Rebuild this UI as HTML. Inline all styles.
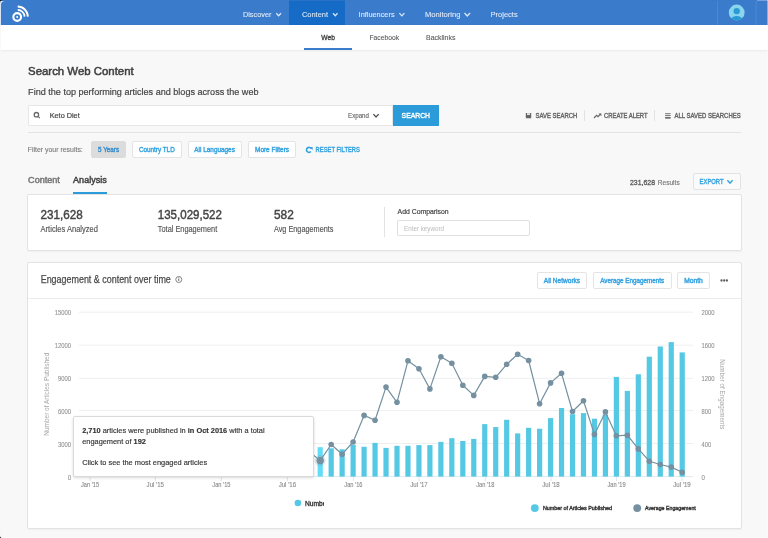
<!DOCTYPE html>
<html><head><meta charset="utf-8"><title>Search Web Content</title>
<style>
html,body{margin:0;padding:0;}
body{width:768px;height:538px;overflow:hidden;background:#f8f8f8;position:relative;font-family:"Liberation Sans", sans-serif;}
.L div{position:absolute;}
svg{position:absolute;left:0;top:0;font-family:"Liberation Sans", sans-serif;will-change:transform;}
</style></head><body>
<div class="L">
<div style="left:0px;top:0px;width:768px;height:25px;background:#3b7bcc;"></div>
<div style="left:289px;top:0px;width:56px;height:1px;background:#2a71c8;"></div>
<div style="left:289px;top:1px;width:56px;height:24px;background:#156bc5;"></div>
<div style="left:717px;top:1px;width:1px;height:24px;background:rgba(255,255,255,0.1);"></div>
<div style="left:755px;top:1px;width:2px;height:24px;background:rgba(255,255,255,0.05);"></div>
<div style="left:757px;top:0px;width:11px;height:1px;background:rgba(255,255,255,0.3);"></div>
<div style="left:0px;top:25px;width:768px;height:25px;background:#fff;box-shadow:0 1px 2px rgba(0,0,0,0.06);"></div>
<div style="left:304px;top:48px;width:48px;height:2px;background:#3b7bcc;"></div>
<div style="left:28px;top:105px;width:365px;height:21px;background:#fff;border:1px solid #e6e6e6;box-sizing:border-box;border-radius:1px;"></div>
<div style="left:393px;top:105px;width:46px;height:21px;background:#2b9cd9;"></div>
<div style="left:584px;top:110px;width:1px;height:11px;background:#e2e2e2;"></div>
<div style="left:654px;top:110px;width:1px;height:11px;background:#e2e2e2;"></div>
<div style="left:28px;top:132px;width:713px;height:1px;background:#e3e3e3;"></div>
<div style="left:91px;top:141px;width:35px;height:17px;background:#dcdcdc;border:1px solid #dcdcdc;box-sizing:border-box;border-radius:2px;"></div>
<div style="left:132px;top:141px;width:50px;height:17px;background:#fff;border:1px solid #e4e4e4;box-sizing:border-box;border-radius:2px;"></div>
<div style="left:188px;top:141px;width:54px;height:17px;background:#fff;border:1px solid #e4e4e4;box-sizing:border-box;border-radius:2px;"></div>
<div style="left:248px;top:141px;width:48px;height:17px;background:#fff;border:1px solid #e4e4e4;box-sizing:border-box;border-radius:2px;"></div>
<div style="left:73px;top:192px;width:34px;height:2px;background:#2b9cd9;"></div>
<div style="left:693px;top:173px;width:48px;height:17px;background:#fafafa;border:1px solid #e3e3e3;box-sizing:border-box;border-radius:2px;"></div>
<div style="left:27px;top:194px;width:715px;height:57px;background:#fff;border:1px solid #e3e3e3;box-sizing:border-box;border-radius:2px;box-shadow:0 1px 1px rgba(0,0,0,0.04);"></div>
<div style="left:384px;top:207px;width:1px;height:30px;background:#e3e3e3;"></div>
<div style="left:397px;top:220px;width:133px;height:16px;background:#fff;border:1px solid #e0e0e0;box-sizing:border-box;border-radius:2px;"></div>
<div style="left:27px;top:262px;width:715px;height:267px;background:#fff;border:1px solid #e3e3e3;box-sizing:border-box;border-radius:2px;box-shadow:0 1px 1px rgba(0,0,0,0.04);"></div>
<div style="left:28px;top:298px;width:713px;height:1px;background:#ececec;"></div>
<div style="left:537px;top:272px;width:50px;height:17px;background:#fff;border:1px solid #e4e4e4;box-sizing:border-box;border-radius:2px;"></div>
<div style="left:593px;top:272px;width:79px;height:17px;background:#fff;border:1px solid #e4e4e4;box-sizing:border-box;border-radius:2px;"></div>
<div style="left:677px;top:272px;width:33px;height:17px;background:#fff;border:1px solid #e4e4e4;box-sizing:border-box;border-radius:2px;"></div>
</div>
<svg width="768" height="538" viewBox="0 0 768 538">
<polyline points="276.30,13.21 278.65,15.79 281.00,13.21" fill="none" stroke="rgba(255,255,255,0.82)" stroke-width="1.3"/>
<polyline points="333.00,13.26 335.25,15.74 337.50,13.26" fill="none" stroke="rgba(255,255,255,0.82)" stroke-width="1.3"/>
<polyline points="399.40,13.12 401.90,15.88 404.40,13.12" fill="none" stroke="rgba(255,255,255,0.82)" stroke-width="1.3"/>
<polyline points="464.50,12.99 467.25,16.01 470.00,12.99" fill="none" stroke="rgba(255,255,255,0.82)" stroke-width="1.3"/>
<g fill="none" stroke="#fff"><circle cx="17.2" cy="17.0" r="3.85" stroke-width="2.1"/><circle cx="17.2" cy="17.0" r="1.0" fill="#fff" stroke="none"/><path d="M17.7 9.9 A7.1 7.1 0 0 1 24.6 16.6" stroke-width="1.8"/><path d="M17.7 6.5 A10.4 10.4 0 0 1 27.9 16.6" stroke-width="1.8"/></g>
<circle cx="736.7" cy="12.5" r="7.9" fill="#8ad5ee"/><circle cx="736.7" cy="11.1" r="3.2" fill="#2a9ad6"/><clipPath id="av"><circle cx="736.7" cy="12.5" r="7.9"/></clipPath><ellipse cx="736.7" cy="20.0" rx="5.8" ry="4.0" fill="#2a9ad6" clip-path="url(#av)"/>
<circle cx="36.4" cy="114.7" r="2.2" fill="none" stroke="#6a6a6a" stroke-width="1.3"/><line x1="38.1" y1="116.4" x2="39.8" y2="118.1" stroke="#6a6a6a" stroke-width="1.3"/>
<polyline points="373.40,114.14 376.05,117.06 378.70,114.14" fill="none" stroke="#555" stroke-width="1.4"/>
<rect x="525.8" y="112.9" width="5.4" height="5.4" rx="0.6" fill="#666"/><rect x="527.0" y="113.3" width="3.0" height="1.6" fill="#f6f6f6"/>
<polyline points="594,118 596.6,115.4 598,116.6 600.6,114" fill="none" stroke="#666" stroke-width="1.2"/><polygon points="598.6,113.4 601.4,113.4 601.4,116.2" fill="#666"/>
<g fill="#707070"><rect x="665.1" y="113.2" width="5.5" height="1.0"/><rect x="665.1" y="115.1" width="5.5" height="1.0"/><rect x="665.1" y="117.0" width="5.5" height="1.7"/></g>
<path d="M311.27 148.84 A2.5 2.5 0 1 0 310.9 151.5" fill="none" stroke="#35a2e0" stroke-width="1.6"/><polygon points="309.6,147.0 312.6,147.0 312.6,150.0" fill="#35a2e0"/>
<polyline points="727.40,180.37 730.00,183.23 732.60,180.37" fill="none" stroke="#35a2e0" stroke-width="1.5"/>
<circle cx="178.75" cy="279.5" r="3.0" fill="none" stroke="#808080" stroke-width="1.0"/><rect x="178.25" y="278.6" width="1.0" height="2.3" fill="#666"/><rect x="178.25" y="277.4" width="1.0" height="0.8" fill="#777"/>
<g fill="#5c5c5c"><circle cx="721.5" cy="280.5" r="1.15"/><circle cx="724.2" cy="280.5" r="1.15"/><circle cx="726.9" cy="280.5" r="1.15"/></g>
<line x1="78.9" y1="312.2" x2="693.2" y2="312.2" stroke="#efefef" stroke-width="1"/>
<line x1="78.9" y1="345.2" x2="693.2" y2="345.2" stroke="#efefef" stroke-width="1"/>
<line x1="78.9" y1="378.3" x2="693.2" y2="378.3" stroke="#efefef" stroke-width="1"/>
<line x1="78.9" y1="410.6" x2="693.2" y2="410.6" stroke="#efefef" stroke-width="1"/>
<line x1="78.9" y1="443.5" x2="693.2" y2="443.5" stroke="#efefef" stroke-width="1"/>
<line x1="78.9" y1="476.6" x2="693.2" y2="476.6" stroke="#dfe8f0" stroke-width="1"/>
<line x1="90" y1="476.6" x2="90" y2="481.20000000000005" stroke="#dde6ef" stroke-width="1"/>
<line x1="155.3" y1="476.6" x2="155.3" y2="481.20000000000005" stroke="#dde6ef" stroke-width="1"/>
<line x1="221.4" y1="476.6" x2="221.4" y2="481.20000000000005" stroke="#dde6ef" stroke-width="1"/>
<line x1="287.4" y1="476.6" x2="287.4" y2="481.20000000000005" stroke="#dde6ef" stroke-width="1"/>
<line x1="353.4" y1="476.6" x2="353.4" y2="481.20000000000005" stroke="#dde6ef" stroke-width="1"/>
<line x1="419" y1="476.6" x2="419" y2="481.20000000000005" stroke="#dde6ef" stroke-width="1"/>
<line x1="485.3" y1="476.6" x2="485.3" y2="481.20000000000005" stroke="#dde6ef" stroke-width="1"/>
<line x1="551" y1="476.6" x2="551" y2="481.20000000000005" stroke="#dde6ef" stroke-width="1"/>
<line x1="616.5" y1="476.6" x2="616.5" y2="481.20000000000005" stroke="#dde6ef" stroke-width="1"/>
<line x1="682" y1="476.6" x2="682" y2="481.20000000000005" stroke="#dde6ef" stroke-width="1"/>
<rect x="317.60" y="447.20" width="5.2" height="29.40" fill="#62dcf7"/><rect x="328.57" y="448.30" width="5.2" height="28.30" fill="#55c9e4"/><rect x="339.54" y="449.30" width="5.2" height="27.30" fill="#55c9e4"/><rect x="350.51" y="444.80" width="5.2" height="31.80" fill="#55c9e4"/><rect x="361.48" y="446.80" width="5.2" height="29.80" fill="#55c9e4"/><rect x="372.45" y="442.90" width="5.2" height="33.70" fill="#55c9e4"/><rect x="383.42" y="447.90" width="5.2" height="28.70" fill="#55c9e4"/><rect x="394.39" y="445.80" width="5.2" height="30.80" fill="#55c9e4"/><rect x="405.36" y="445.80" width="5.2" height="30.80" fill="#55c9e4"/><rect x="416.33" y="445.10" width="5.2" height="31.50" fill="#55c9e4"/><rect x="427.30" y="445.10" width="5.2" height="31.50" fill="#55c9e4"/><rect x="438.27" y="441.90" width="5.2" height="34.70" fill="#55c9e4"/><rect x="449.24" y="438.20" width="5.2" height="38.40" fill="#55c9e4"/><rect x="460.21" y="441.00" width="5.2" height="35.60" fill="#55c9e4"/><rect x="471.18" y="438.90" width="5.2" height="37.70" fill="#55c9e4"/><rect x="482.15" y="424.10" width="5.2" height="52.50" fill="#55c9e4"/><rect x="493.12" y="427.10" width="5.2" height="49.50" fill="#55c9e4"/><rect x="504.09" y="419.80" width="5.2" height="56.80" fill="#55c9e4"/><rect x="515.06" y="433.40" width="5.2" height="43.20" fill="#55c9e4"/><rect x="526.03" y="427.80" width="5.2" height="48.80" fill="#55c9e4"/><rect x="537.00" y="428.70" width="5.2" height="47.90" fill="#55c9e4"/><rect x="547.97" y="418.10" width="5.2" height="58.50" fill="#55c9e4"/><rect x="558.94" y="408.00" width="5.2" height="68.60" fill="#55c9e4"/><rect x="569.91" y="414.20" width="5.2" height="62.40" fill="#55c9e4"/><rect x="580.88" y="413.10" width="5.2" height="63.50" fill="#55c9e4"/><rect x="591.85" y="418.70" width="5.2" height="57.90" fill="#55c9e4"/><rect x="602.82" y="414.60" width="5.2" height="62.00" fill="#55c9e4"/><rect x="613.79" y="376.90" width="5.2" height="99.70" fill="#55c9e4"/><rect x="624.76" y="390.90" width="5.2" height="85.70" fill="#55c9e4"/><rect x="635.73" y="374.30" width="5.2" height="102.30" fill="#55c9e4"/><rect x="646.70" y="356.70" width="5.2" height="119.90" fill="#55c9e4"/><rect x="657.67" y="346.50" width="5.2" height="130.10" fill="#55c9e4"/><rect x="668.64" y="342.10" width="5.2" height="134.50" fill="#55c9e4"/><rect x="679.61" y="352.40" width="5.2" height="124.20" fill="#55c9e4"/>
<path d="M300,444 L320.20,460.60 L331.17,444.50 L342.14,454.20 L353.11,442.00 L364.08,415.40 L375.05,420.30 L386.02,387.10 L396.99,402.30 L407.96,360.80 L418.93,368.80 L429.90,388.90 L440.87,356.70 L451.84,363.20 L462.81,385.20 L473.78,395.40 L484.75,376.40 L495.72,377.30 L506.69,364.30 L517.66,354.30 L528.63,360.50 L539.60,403.70 L550.57,382.90 L561.54,373.30 L572.51,411.50 L583.48,400.70 L594.45,434.40 L605.42,411.90 L616.39,435.80 L627.36,435.20 L638.33,448.90 L649.30,461.20 L660.27,464.50 L671.24,467.10 L682.21,472.30" fill="none" stroke="#7590a0" stroke-width="1.2" stroke-linejoin="round"/>
<circle cx="320.2" cy="460.6" r="5.6" fill="#7590a0" fill-opacity="0.22"/>
<circle cx="320.20" cy="460.60" r="3.7" fill="#7590a0"/>
<circle cx="331.17" cy="444.50" r="2.8" fill="#7590a0"/>
<circle cx="342.14" cy="454.20" r="2.8" fill="#7590a0"/>
<circle cx="353.11" cy="442.00" r="2.8" fill="#7590a0"/>
<circle cx="364.08" cy="415.40" r="2.8" fill="#7590a0"/>
<circle cx="375.05" cy="420.30" r="2.8" fill="#7590a0"/>
<circle cx="386.02" cy="387.10" r="2.8" fill="#7590a0"/>
<circle cx="396.99" cy="402.30" r="2.8" fill="#7590a0"/>
<circle cx="407.96" cy="360.80" r="2.8" fill="#7590a0"/>
<circle cx="418.93" cy="368.80" r="2.8" fill="#7590a0"/>
<circle cx="429.90" cy="388.90" r="2.8" fill="#7590a0"/>
<circle cx="440.87" cy="356.70" r="2.8" fill="#7590a0"/>
<circle cx="451.84" cy="363.20" r="2.8" fill="#7590a0"/>
<circle cx="462.81" cy="385.20" r="2.8" fill="#7590a0"/>
<circle cx="473.78" cy="395.40" r="2.8" fill="#7590a0"/>
<circle cx="484.75" cy="376.40" r="2.8" fill="#7590a0"/>
<circle cx="495.72" cy="377.30" r="2.8" fill="#7590a0"/>
<circle cx="506.69" cy="364.30" r="2.8" fill="#7590a0"/>
<circle cx="517.66" cy="354.30" r="2.8" fill="#7590a0"/>
<circle cx="528.63" cy="360.50" r="2.8" fill="#7590a0"/>
<circle cx="539.60" cy="403.70" r="2.8" fill="#7590a0"/>
<circle cx="550.57" cy="382.90" r="2.8" fill="#7590a0"/>
<circle cx="561.54" cy="373.30" r="2.8" fill="#7590a0"/>
<circle cx="572.51" cy="411.50" r="2.8" fill="#7590a0"/>
<circle cx="583.48" cy="400.70" r="2.8" fill="#7590a0"/>
<circle cx="594.45" cy="434.40" r="2.8" fill="#7590a0"/>
<circle cx="605.42" cy="411.90" r="2.8" fill="#7590a0"/>
<circle cx="616.39" cy="435.80" r="2.8" fill="#7590a0"/>
<circle cx="627.36" cy="435.20" r="2.8" fill="#7590a0"/>
<circle cx="638.33" cy="448.90" r="2.8" fill="#7590a0"/>
<circle cx="649.30" cy="461.20" r="2.8" fill="#7590a0"/>
<circle cx="660.27" cy="464.50" r="2.8" fill="#7590a0"/>
<circle cx="671.24" cy="467.10" r="2.8" fill="#7590a0"/>
<circle cx="682.21" cy="472.30" r="2.8" fill="#7590a0"/>
<circle cx="297.9" cy="503" r="3.3" fill="#55c9e4"/>
<clipPath id="numb"><rect x="300" y="495" width="24" height="15"/></clipPath>
<circle cx="534.8" cy="508.1" r="3.9" fill="#55c9e4"/>
<circle cx="637.2" cy="508.1" r="3.9" fill="#7590a0"/>
<rect x="0" y="0" width="1" height="538" fill="#f4f7fb" fill-opacity="0.85"/>
<rect x="767" y="0" width="1" height="538" fill="#ffffff" fill-opacity="0.4"/>
<path d="M1 1 H5 A4 4 0 0 0 1 5 Z" fill="#e6edf7"/>
<path d="M0 0 H3 A3 3 0 0 0 0 3 Z" fill="#000"/>
<path d="M0 538 H2.6 A2.6 2.6 0 0 1 0 535.4 Z" fill="#000"/>
<text x="242.90" y="17.20" font-size="7.8" fill="rgba(255,255,255,0.82)" stroke="rgba(255,255,255,0.82)" stroke-width="0.1" textLength="28.50" lengthAdjust="spacingAndGlyphs">Discover</text>
<text x="302.00" y="17.20" font-size="7.8" fill="rgba(255,255,255,0.82)" stroke="rgba(255,255,255,0.82)" stroke-width="0.1" textLength="26.00" lengthAdjust="spacingAndGlyphs">Content</text>
<text x="358.60" y="17.20" font-size="7.8" fill="rgba(255,255,255,0.82)" stroke="rgba(255,255,255,0.82)" stroke-width="0.1" textLength="36.00" lengthAdjust="spacingAndGlyphs">Influencers</text>
<text x="424.90" y="17.20" font-size="7.8" fill="rgba(255,255,255,0.82)" stroke="rgba(255,255,255,0.82)" stroke-width="0.1" textLength="35.60" lengthAdjust="spacingAndGlyphs">Monitoring</text>
<text x="490.50" y="17.20" font-size="7.8" fill="rgba(255,255,255,0.82)" stroke="rgba(255,255,255,0.82)" stroke-width="0.1" textLength="27.20" lengthAdjust="spacingAndGlyphs">Projects</text>
<text x="321.30" y="40.40" font-size="6.9" fill="#3a3a3a" stroke="#3a3a3a" stroke-width="0.3" textLength="13.60" lengthAdjust="spacingAndGlyphs">Web</text>
<text x="369.50" y="40.40" font-size="6.9" fill="#5a5a5a" stroke="#5a5a5a" stroke-width="0.1" textLength="29.60" lengthAdjust="spacingAndGlyphs">Facebook</text>
<text x="426.00" y="40.40" font-size="6.9" fill="#5a5a5a" stroke="#5a5a5a" stroke-width="0.1" textLength="29.40" lengthAdjust="spacingAndGlyphs">Backlinks</text>
<text x="28.10" y="75.30" font-size="11.3" fill="#3f3f3f" stroke="#3f3f3f" stroke-width="0.5" textLength="105.60" lengthAdjust="spacingAndGlyphs">Search Web Content</text>
<text x="28.10" y="95.30" font-size="9.7" fill="#444" stroke="#444" stroke-width="0.2" textLength="230.40" lengthAdjust="spacingAndGlyphs">Find the top performing articles and blogs across the web</text>
<text x="49.70" y="117.90" font-size="7.8" fill="#444" stroke="#444" stroke-width="0.2" textLength="30.00" lengthAdjust="spacingAndGlyphs">Keto Diet</text>
<text x="348.00" y="118.00" font-size="6.8" fill="#6a6a6a" stroke="#6a6a6a" stroke-width="0.15" textLength="21.00" lengthAdjust="spacingAndGlyphs">Expand</text>
<text x="401.60" y="118.30" font-size="8.0" fill="#fff" stroke="#fff" stroke-width="0.4" textLength="28.40" lengthAdjust="spacingAndGlyphs">SEARCH</text>
<text x="535.60" y="118.30" font-size="6.9" fill="#666" stroke="#666" stroke-width="0.4" textLength="41.60" lengthAdjust="spacingAndGlyphs">SAVE SEARCH</text>
<text x="604.00" y="118.30" font-size="6.9" fill="#666" stroke="#666" stroke-width="0.4" textLength="43.60" lengthAdjust="spacingAndGlyphs">CREATE ALERT</text>
<text x="674.60" y="118.30" font-size="6.9" fill="#666" stroke="#666" stroke-width="0.4" textLength="66.00" lengthAdjust="spacingAndGlyphs">ALL SAVED SEARCHES</text>
<text x="27.70" y="152.00" font-size="7.0" fill="#777" stroke="#777" stroke-width="0.1" textLength="55.10" lengthAdjust="spacingAndGlyphs">Filter your results:</text>
<text x="98.00" y="152.00" font-size="6.8" fill="#3b8fcc" stroke="#3b8fcc" stroke-width="0.4" textLength="21.10" lengthAdjust="spacingAndGlyphs">5 Years</text>
<text x="139.00" y="152.00" font-size="6.8" fill="#35a2e0" stroke="#35a2e0" stroke-width="0.4" textLength="35.70" lengthAdjust="spacingAndGlyphs">Country TLD</text>
<text x="194.30" y="152.00" font-size="6.8" fill="#35a2e0" stroke="#35a2e0" stroke-width="0.4" textLength="40.60" lengthAdjust="spacingAndGlyphs">All Languages</text>
<text x="255.00" y="152.00" font-size="6.8" fill="#35a2e0" stroke="#35a2e0" stroke-width="0.4" textLength="34.10" lengthAdjust="spacingAndGlyphs">More Filters</text>
<text x="315.60" y="152.00" font-size="6.8" fill="#35a2e0" stroke="#35a2e0" stroke-width="0.4" textLength="44.30" lengthAdjust="spacingAndGlyphs">RESET FILTERS</text>
<text x="28.10" y="183.00" font-size="9.3" fill="#777" stroke="#777" stroke-width="0.5" textLength="31.70" lengthAdjust="spacingAndGlyphs">Content</text>
<text x="73.10" y="183.00" font-size="9.3" fill="#444" stroke="#444" stroke-width="0.5" textLength="33.60" lengthAdjust="spacingAndGlyphs">Analysis</text>
<text x="630.00" y="185.00" font-size="7.4" fill="#585858" stroke="#585858" stroke-width="0.3" textLength="25.00" lengthAdjust="spacingAndGlyphs">231,628</text>
<text x="657.80" y="185.00" font-size="7.4" fill="#777" stroke="#777" stroke-width="0.15" textLength="21.90" lengthAdjust="spacingAndGlyphs">Results</text>
<text x="699.60" y="184.00" font-size="7.0" fill="#35a2e0" stroke="#35a2e0" stroke-width="0.4" textLength="23.90" lengthAdjust="spacingAndGlyphs">EXPORT</text>
<text x="40.60" y="218.60" font-size="12.0" fill="#444" stroke="#444" stroke-width="0.42" textLength="42.10" lengthAdjust="spacingAndGlyphs">231,628</text>
<text x="40.60" y="231.80" font-size="8.2" fill="#555" stroke="#555" stroke-width="0.15" textLength="57.30" lengthAdjust="spacingAndGlyphs">Articles Analyzed</text>
<text x="157.80" y="218.60" font-size="12.0" fill="#444" stroke="#444" stroke-width="0.42" textLength="64.10" lengthAdjust="spacingAndGlyphs">135,029,522</text>
<text x="157.80" y="231.80" font-size="8.2" fill="#555" stroke="#555" stroke-width="0.15" textLength="59.40" lengthAdjust="spacingAndGlyphs">Total Engagement</text>
<text x="274.00" y="218.60" font-size="12.0" fill="#444" stroke="#444" stroke-width="0.42" textLength="19.75" lengthAdjust="spacingAndGlyphs">582</text>
<text x="274.00" y="231.80" font-size="8.2" fill="#555" stroke="#555" stroke-width="0.15" textLength="59.40" lengthAdjust="spacingAndGlyphs">Avg Engagements</text>
<text x="397.60" y="214.00" font-size="7.4" fill="#444" stroke="#444" stroke-width="0.2" textLength="51.10" lengthAdjust="spacingAndGlyphs">Add Comparison</text>
<text x="404.10" y="230.60" font-size="6.8" fill="#bbb" textLength="39.90" lengthAdjust="spacingAndGlyphs">Enter keyword</text>
<text x="40.70" y="283.10" font-size="10.3" fill="#4a4a4a" stroke="#4a4a4a" stroke-width="0.25" textLength="130.10" lengthAdjust="spacingAndGlyphs">Engagement &amp; content over time</text>
<text x="543.80" y="282.60" font-size="6.8" fill="#35a2e0" stroke="#35a2e0" stroke-width="0.4" textLength="36.30" lengthAdjust="spacingAndGlyphs">All Networks</text>
<text x="600.20" y="282.60" font-size="6.8" fill="#35a2e0" stroke="#35a2e0" stroke-width="0.4" textLength="63.90" lengthAdjust="spacingAndGlyphs">Average Engagements</text>
<text x="684.20" y="282.60" font-size="6.8" fill="#35a2e0" stroke="#35a2e0" stroke-width="0.4" textLength="18.60" lengthAdjust="spacingAndGlyphs">Month</text>
<text x="54.70" y="315.30" font-size="6.6" fill="#929292" stroke="#929292" stroke-width="0.1" textLength="16.40" lengthAdjust="spacingAndGlyphs">15000</text>
<text x="701.50" y="315.30" font-size="6.6" fill="#929292" stroke="#929292" stroke-width="0.1" textLength="13.10" lengthAdjust="spacingAndGlyphs">2000</text>
<text x="54.70" y="348.30" font-size="6.6" fill="#929292" stroke="#929292" stroke-width="0.1" textLength="16.40" lengthAdjust="spacingAndGlyphs">12000</text>
<text x="701.50" y="348.30" font-size="6.6" fill="#929292" stroke="#929292" stroke-width="0.1" textLength="13.10" lengthAdjust="spacingAndGlyphs">1600</text>
<text x="58.00" y="381.40" font-size="6.6" fill="#929292" stroke="#929292" stroke-width="0.1" textLength="13.10" lengthAdjust="spacingAndGlyphs">9000</text>
<text x="701.50" y="381.40" font-size="6.6" fill="#929292" stroke="#929292" stroke-width="0.1" textLength="13.10" lengthAdjust="spacingAndGlyphs">1200</text>
<text x="58.00" y="413.70" font-size="6.6" fill="#929292" stroke="#929292" stroke-width="0.1" textLength="13.10" lengthAdjust="spacingAndGlyphs">6000</text>
<text x="701.50" y="413.70" font-size="6.6" fill="#929292" stroke="#929292" stroke-width="0.1" textLength="9.60" lengthAdjust="spacingAndGlyphs">800</text>
<text x="58.00" y="446.60" font-size="6.6" fill="#929292" stroke="#929292" stroke-width="0.1" textLength="13.10" lengthAdjust="spacingAndGlyphs">3000</text>
<text x="701.50" y="446.60" font-size="6.6" fill="#929292" stroke="#929292" stroke-width="0.1" textLength="9.60" lengthAdjust="spacingAndGlyphs">400</text>
<text x="67.70" y="479.70" font-size="6.6" fill="#929292" stroke="#929292" stroke-width="0.1" textLength="3.40" lengthAdjust="spacingAndGlyphs">0</text>
<text x="701.50" y="479.70" font-size="6.6" fill="#929292" stroke="#929292" stroke-width="0.1" textLength="3.40" lengthAdjust="spacingAndGlyphs">0</text>
<text x="90.00" y="487.00" font-size="6.6" fill="#888" stroke="#888" stroke-width="0.1" text-anchor="middle" textLength="18.20" lengthAdjust="spacingAndGlyphs">Jan '15</text>
<text x="155.30" y="487.00" font-size="6.6" fill="#888" stroke="#888" stroke-width="0.1" text-anchor="middle" textLength="17.40" lengthAdjust="spacingAndGlyphs">Jul '15</text>
<text x="221.40" y="487.00" font-size="6.6" fill="#888" stroke="#888" stroke-width="0.1" text-anchor="middle" textLength="18.20" lengthAdjust="spacingAndGlyphs">Jan '15</text>
<text x="287.40" y="487.00" font-size="6.6" fill="#888" stroke="#888" stroke-width="0.1" text-anchor="middle" textLength="17.40" lengthAdjust="spacingAndGlyphs">Jul '16</text>
<text x="353.40" y="487.00" font-size="6.6" fill="#888" stroke="#888" stroke-width="0.1" text-anchor="middle" textLength="18.20" lengthAdjust="spacingAndGlyphs">Jan '16</text>
<text x="419.00" y="487.00" font-size="6.6" fill="#888" stroke="#888" stroke-width="0.1" text-anchor="middle" textLength="17.40" lengthAdjust="spacingAndGlyphs">Jul '17</text>
<text x="485.30" y="487.00" font-size="6.6" fill="#888" stroke="#888" stroke-width="0.1" text-anchor="middle" textLength="18.20" lengthAdjust="spacingAndGlyphs">Jan '18</text>
<text x="551.00" y="487.00" font-size="6.6" fill="#888" stroke="#888" stroke-width="0.1" text-anchor="middle" textLength="17.40" lengthAdjust="spacingAndGlyphs">Jul '18</text>
<text x="616.50" y="487.00" font-size="6.6" fill="#888" stroke="#888" stroke-width="0.1" text-anchor="middle" textLength="18.20" lengthAdjust="spacingAndGlyphs">Jan '19</text>
<text x="682.00" y="487.00" font-size="6.6" fill="#888" stroke="#888" stroke-width="0.1" text-anchor="middle" textLength="17.40" lengthAdjust="spacingAndGlyphs">Jul '19</text>
<text x="0.00" y="0.00" font-size="6.3" fill="#a6a6a6" text-anchor="middle" textLength="83.00" lengthAdjust="spacingAndGlyphs" transform="translate(49.3 394.2) rotate(-90)">Number of Articles Published</text>
<text x="0.00" y="0.00" font-size="6.3" fill="#a6a6a6" text-anchor="middle" textLength="70.00" lengthAdjust="spacingAndGlyphs" transform="translate(719.8 394.3) rotate(90)">Number of Engagements</text>
<text x="305.00" y="505.90" font-size="7.0" fill="#333" stroke="#333" stroke-width="0.35" textLength="21.40" lengthAdjust="spacingAndGlyphs" clip-path="url(#numb)">Numbe</text>
<text x="542.90" y="510.40" font-size="6.0" fill="#333" stroke="#333" stroke-width="0.4" textLength="69.00" lengthAdjust="spacingAndGlyphs">Number of Articles Published</text>
<text x="645.00" y="510.40" font-size="6.0" fill="#333" stroke="#333" stroke-width="0.4" textLength="50.80" lengthAdjust="spacingAndGlyphs">Average Engagement</text>
</svg>
<div style="position:absolute;left:73px;top:416px;width:241px;height:61px;background:#fff;border:1px solid #dadada;box-sizing:border-box;border-radius:2px;box-shadow:0 1px 3px rgba(0,0,0,0.15);"></div>
<svg width="768" height="538" viewBox="0 0 768 538">
<text x="82.2" y="433.2" font-size="7.4" fill="#333" stroke="#333" stroke-width="0.15"><tspan font-weight="bold">2,710</tspan><tspan font-weight="normal"> articles were published in </tspan><tspan font-weight="bold">in Oct 2016</tspan><tspan font-weight="normal"> with a total</tspan></text>
<text x="82.2" y="444.0" font-size="7.4" fill="#333" stroke="#333" stroke-width="0.15"><tspan font-weight="normal">engagement of </tspan><tspan font-weight="bold">192</tspan></text>
<text x="82.2" y="465.3" font-size="7.4" fill="#333" stroke="#333" stroke-width="0.15"><tspan font-weight="normal">Click to see the most engaged articles</tspan></text>
</svg>
</body></html>
